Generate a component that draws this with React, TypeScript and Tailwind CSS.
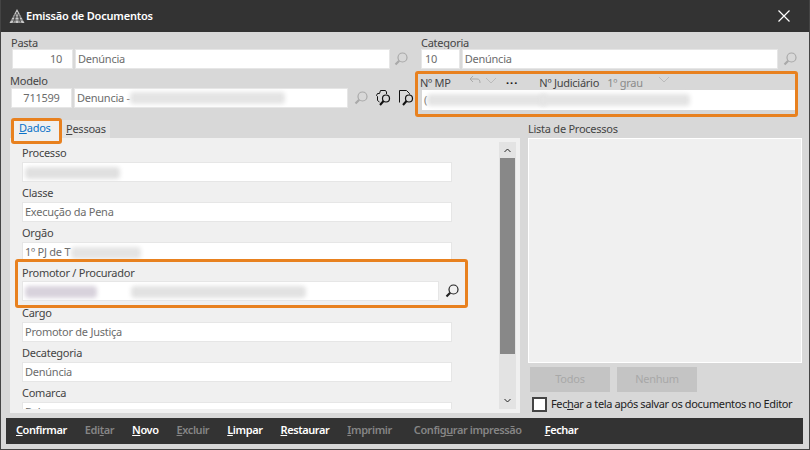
const font = "font-['Noto_Sans',sans-serif]";

const Blur = ({ className }: { className: string }) => (
  <div className={`blur-[2px] rounded-sm ${className}`} />
);

const Lens = ({ dark = false }: { dark?: boolean }) => (
  <svg width="16" height="16" viewBox="0 0 16 16" fill="none" stroke={dark ? "#222" : "#a9a9a9"}>
    <circle cx="9.5" cy="6.5" r="4.5" strokeWidth="1.2" />
    <path d="M6.2 9.8 2.5 13.5" strokeWidth="2.2" />
  </svg>
);

const DocLens = ({ flip = false }: { flip?: boolean }) => (
  <svg width="17" height="18" viewBox="0 0 17 18" fill="none" stroke="#111" strokeWidth="1">
    {flip ? (
      <path d="M1.5 13.5v-12h7l3 3v1" />
    ) : (
      <path d="M5.5 1.5h5l1 1.5v2M5.5 1.5l-1 3h-2l-1 2 1 1v4l2 1.5" />
    )}
    <circle cx="11" cy="9.5" r="3.5" strokeWidth="1.2" />
    <path d="M8.5 12 5 16" strokeWidth="2" />
  </svg>
);

const Input = ({ className = "", children }: { className?: string; children?: React.ReactNode }) => (
  <div className={`h-5 bg-white border border-[#e6e6e6] flex items-center px-[2px] pt-px text-[#6c6c6c] overflow-hidden ${className}`}>
    {children}
  </div>
);

const Field = ({ label, value }: { label: string; value?: React.ReactNode }) => (
  <div>
    <div className="h-5 pt-px leading-[20px] text-[#444]">{label}</div>
    <Input className="w-[430px]">{value}</Input>
  </div>
);

const ToolItem = ({ className, off, children }: { className: string; off?: boolean; children: React.ReactNode }) => (
  <span className={`font-semibold tracking-[-0.42px] ${off ? "text-[#858585]" : "text-white"} ${className}`}>{children}</span>
);

export default function App() {
  return (
    <div className={`w-[810px] h-[450px] flex flex-col bg-[#d8d8d8] border-l border-r border-b border-[#444] text-[11px] tracking-[-0.25px] ${font} overflow-hidden`}>
      <header className="h-8 shrink-0 bg-[#333] flex items-center pl-2 pr-[19px]">
        <svg width="16" height="15" viewBox="0 0 16 15" className="shrink-0">
          <path d="M8 0 15.5 14H.5Z" fill="#c8c8c8" />
          <path d="M4 14 8 3l4 11M1 11h14M3 8h10M6 14V5M10 14V5" stroke="#333" strokeWidth=".7" fill="none" />
        </svg>
        <span className="ml-[1px] text-white font-semibold tracking-[-0.2px]">Emissão de Documentos</span>
        <svg width="12" height="12" viewBox="0 0 12 12" className="ml-auto" stroke="#fff" strokeWidth="1.2">
          <path d="M.5.5l11 11M11.5.5l-11 11" />
        </svg>
      </header>

      <div className="h-[86px] shrink-0 flex">
        <div className="w-[414px] shrink-0 pt-[3px] text-[#444]">
          <div className="pl-[10px] h-[14px] leading-[16px]">Pasta</div>
          <div className="flex items-center pl-[11px] gap-[2px]">
            <Input className="w-[61px] justify-end pr-[10px]">10</Input>
            <Input className="w-[315px]">Denúncia</Input>
            <span className="ml-[1px]"><Lens /></span>
          </div>
          <div className="pl-[9px] h-[19px] leading-[24px]">Modelo</div>
          <div className="flex items-center pl-[10px] gap-[2px]">
            <Input className="w-[61px] justify-center">711599</Input>
            <Input className="w-[274px] relative">
              Denuncia -
              <Blur className="absolute left-[55px] top-[3px] w-[155px] h-3 bg-[#e4e4e4]" />
            </Input>
            <span className="ml-[3px]"><Lens /></span>
            <span className="ml-[4px]"><DocLens /></span>
            <span className="ml-[4px]"><DocLens flip /></span>
          </div>
        </div>
        <div className="w-[383px] shrink-0 pt-[3px] text-[#444]">
          <div className="pl-[6px] h-[14px] leading-[16px]">Categoria</div>
          <div className="flex items-center pl-[6px] gap-[2px]">
            <Input className="w-[39px] pl-[3px]">10</Input>
            <Input className="w-[319px]">Denúncia</Input>
            <span className="ml-[2px]"><Lens /></span>
          </div>
          <div className="mt-[2px] h-[46px] border-[3px] border-[#e8811f] rounded-[3px]">
            <div className="h-4 flex items-center pl-[2px]">
              <span className="w-[49px] pt-[2px]">Nº MP</span>
              <svg width="12" height="10" viewBox="0 0 12 10" fill="none" stroke="#aaa" className="-mt-[4px]"><path d="M4 1 1 4l3 3M1 4h7c2 0 3 1 3 4" /></svg>
              <svg width="12" height="7" viewBox="0 0 12 7" fill="none" stroke="#bbb" className="ml-[4px] -mt-[4px]"><path d="M1 1l5 5 5-5" /></svg>
              <span className="ml-[9px] font-bold text-[#111] tracking-[1px] leading-none -mt-[6px]">...</span>
              <span className="ml-[21px] pt-[2px]">Nº Judiciário</span>
              <span className="ml-[8px] pt-[2px] text-[#8a8a8a]">1º grau</span>
              <svg width="12" height="7" viewBox="0 0 12 7" fill="none" stroke="#bbb" className="ml-[15px] -mt-[6px]"><path d="M1 1l5 5 5-5" /></svg>
            </div>
            <div className="ml-[4px] h-5 bg-white relative pl-[2px] leading-[20px] text-[#6c6c6c]">
              (
              <Blur className="absolute left-[5px] top-1 w-[120px] h-3 bg-[#e4e4e4]" />
              <Blur className="absolute left-[118px] top-1 w-[150px] h-3 bg-[#e4e4e4]" />
            </div>
          </div>
        </div>
      </div>

      <div className="flex-1 flex min-h-0">
        <div className="w-[510px] shrink-0 ml-[9px]">
          <div className="h-5 flex items-start relative z-10">
            <div className="ml-px w-[51px] h-[26px] border-[3px] border-[#e8811f] rounded-[3px] bg-[#f0f0f0] text-[#0a72c9] pl-[5px] leading-[13px]">
              <u>D</u>ados
            </div>
            <div className="mt-[2px] w-12 h-[18px] bg-[#e3e3e3] text-[#444] pl-[4px] leading-[18px]">
              <u>P</u>essoas
            </div>
          </div>
          <div className="h-[275px] bg-[#f0f0f0] pt-1 pb-1 flex">
            <div className="w-[489px] overflow-hidden pl-3">
              <Field label="Processo" value={<Blur className="w-[95px] h-3 bg-[#e0e0e0]" />} />
              <Field label="Classe" value="Execução da Pena" />
              <Field
                label="Orgão"
                value={
                  <>
                    1º PJ de T
                    <Blur className="ml-px w-[70px] h-3 bg-[#e4e4e4]" />
                  </>
                }
              />
              <div className="relative z-10 -mt-[3px] -mb-[6px] -ml-[7px] w-[453px] h-[49px] border-[3px] border-[#e8811f] rounded-[3px] pl-1">
                <div className="h-[19px] leading-[21px] text-[#444]">Promotor / Procurador</div>
                <div className="flex items-center">
                  <Input className="w-[417px]">
                    <Blur className="w-[72px] h-3 bg-[#d8d2dc]" />
                    <Blur className="ml-[34px] w-[175px] h-3 bg-[#e2e2e2]" />
                  </Input>
                  <span className="ml-[5px]"><Lens dark /></span>
                </div>
              </div>
              <Field label="Cargo" value="Promotor de Justiça" />
              <Field label="Decategoria" value="Denúncia" />
              <Field label="Comarca" value="Belo" />
            </div>
            <div className="w-[17px] bg-[#e3e3e3] flex flex-col items-center">
              <div className="h-4 flex items-center justify-center">
                <svg width="7" height="5" viewBox="0 0 7 5" fill="none" stroke="#222"><path d="M.5 4 3.5 1l3 3" /></svg>
              </div>
              <div className="w-[15px] h-[196px] bg-[#888]" />
              <div className="mt-auto h-[18px] flex items-center justify-center">
                <svg width="7" height="5" viewBox="0 0 7 5" fill="none" stroke="#222"><path d="M.5 1l3 3 3-3" /></svg>
              </div>
            </div>
          </div>
        </div>
        <div className="pl-2 w-[282px] shrink-0">
          <div className="h-5 leading-[22px] text-[#444]">Lista de Processos</div>
          <div className="h-[225px] w-[274px] bg-[#f0f0f0] border border-white" />
          <div className="mt-1 ml-[2px] flex gap-[7px] text-[#a8a8a8]">
            <div className="w-20 h-[25px] bg-[#c4c4c4] flex items-center justify-center">Todos</div>
            <div className="w-20 h-[25px] bg-[#c4c4c4] flex items-center justify-center">Nenhum</div>
          </div>
          <div className="mt-1 ml-[4px] flex items-center gap-[4px] text-[#222] tracking-[-0.37px]">
            <div className="w-[15px] h-[15px] bg-white border-2 border-[#444]" />
            <span>Fec<u>h</u>ar a tela após salvar os documentos no Editor</span>
          </div>
        </div>
      </div>

      <div className="h-[26px] shrink-0 mb-[5px] ml-[5px] w-[797px] bg-[#333] flex items-center pb-[2px]">
        <ToolItem className="ml-[10px]"><u>C</u>onfirmar</ToolItem>
        <ToolItem off className="ml-[18px]">Edi<u>t</u>ar</ToolItem>
        <ToolItem className="ml-[18px]"><u>N</u>ovo</ToolItem>
        <ToolItem off className="ml-[18px]"><u>E</u>xcluir</ToolItem>
        <ToolItem className="ml-[18px]"><u>L</u>impar</ToolItem>
        <ToolItem className="ml-[18px]"><u>R</u>estaurar</ToolItem>
        <ToolItem off className="ml-[18px]"><u>I</u>mprimir</ToolItem>
        <ToolItem off className="ml-[22px]">Config<u>u</u>rar impressão</ToolItem>
        <ToolItem className="ml-[23px]"><u>F</u>echar</ToolItem>
      </div>
    </div>
  );
}
